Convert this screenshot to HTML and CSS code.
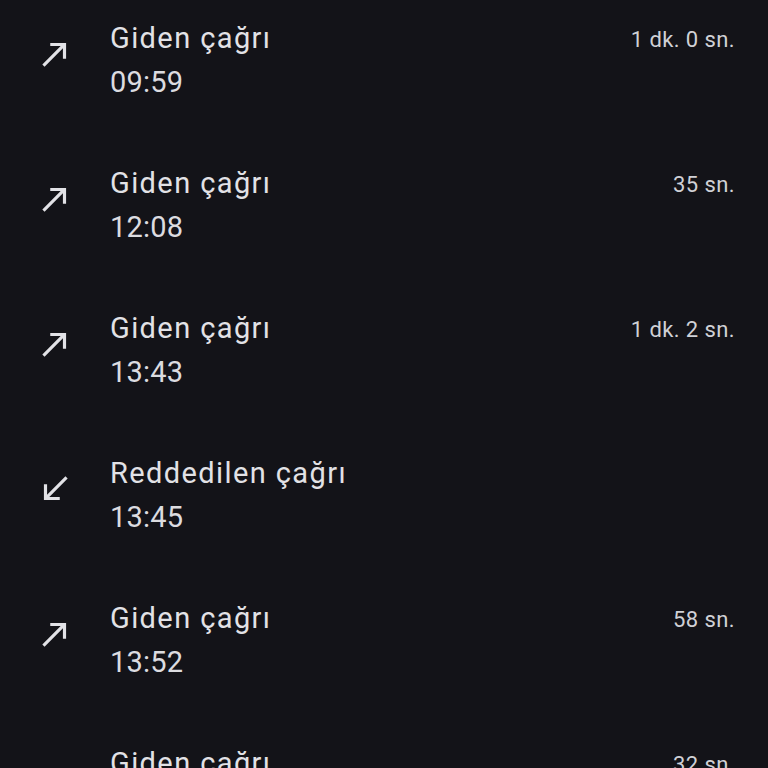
FILE: index.html
```html
<!DOCTYPE html>
<html lang="tr">
<head>
<meta charset="utf-8">
<link rel="stylesheet" href="styles.css">
</head>
<body>
<ul class="calls">
  <li class="call">
    <svg class="icon" viewBox="0 0 24 24"><path d="M9 5v2h6.59L4 18.59 5.41 20 17 8.41V15h2V5z"/></svg>
    <div class="info"><div class="title">Giden çağrı</div><div class="time">09:59</div></div>
    <div class="dur">1 dk. 0 sn.</div>
  </li>
  <li class="call">
    <svg class="icon" viewBox="0 0 24 24"><path d="M9 5v2h6.59L4 18.59 5.41 20 17 8.41V15h2V5z"/></svg>
    <div class="info"><div class="title">Giden çağrı</div><div class="time">12:08</div></div>
    <div class="dur">35 sn.</div>
  </li>
  <li class="call">
    <svg class="icon" viewBox="0 0 24 24"><path d="M9 5v2h6.59L4 18.59 5.41 20 17 8.41V15h2V5z"/></svg>
    <div class="info"><div class="title">Giden çağrı</div><div class="time">13:43</div></div>
    <div class="dur">1 dk. 2 sn.</div>
  </li>
  <li class="call">
    <svg class="icon" viewBox="0 0 24 24"><path d="M20 5.41L18.59 4 7 15.59V9H5v10h10v-2H8.41z"/></svg>
    <div class="info"><div class="title">Reddedilen çağrı</div><div class="time">13:45</div></div>
    <div class="dur"></div>
  </li>
  <li class="call">
    <svg class="icon" viewBox="0 0 24 24"><path d="M9 5v2h6.59L4 18.59 5.41 20 17 8.41V15h2V5z"/></svg>
    <div class="info"><div class="title">Giden çağrı</div><div class="time">13:52</div></div>
    <div class="dur">58 sn.</div>
  </li>
  <li class="call">
    <svg class="icon" viewBox="0 0 24 24"><path d="M9 5v2h6.59L4 18.59 5.41 20 17 8.41V15h2V5z"/></svg>
    <div class="info"><div class="title">Giden çağrı</div><div class="time">14:10</div></div>
    <div class="dur">32 sn.</div>
  </li>
</ul>
</body>
</html>
```
FILE: styles.css
```css
html, body {
  margin: 0;
  padding: 0;
  background: #131318;
  height: 100%;
  overflow: hidden;
}
body {
  font-family: Roboto, "Noto Sans", sans-serif;
  color: #e2e2e6;
}
.calls {
  list-style: none;
  margin: 0;
  padding: 0;
}
.call {
  display: flex;
  align-items: flex-start;
  height: 145px;
  box-sizing: border-box;
  padding: 16px 33px 0 36px;
}
.icon {
  width: 38px;
  height: 38px;
  margin-top: 19px;
  fill: #e2e2e6;
  flex: none;
}
.info {
  margin-left: 36px;
  flex: 1;
}
.title, .time {
  font-size: 29px;
  line-height: 44px;
}
.title {
  letter-spacing: 1.4px;
}
.time {
  color: #dcdce0;
  letter-spacing: 0.2px;
}
.dur {
  font-size: 22px;
  line-height: 28px;
  margin-top: 10px;
  letter-spacing: 0.4px;
  color: #d0d1d6;
}
```
